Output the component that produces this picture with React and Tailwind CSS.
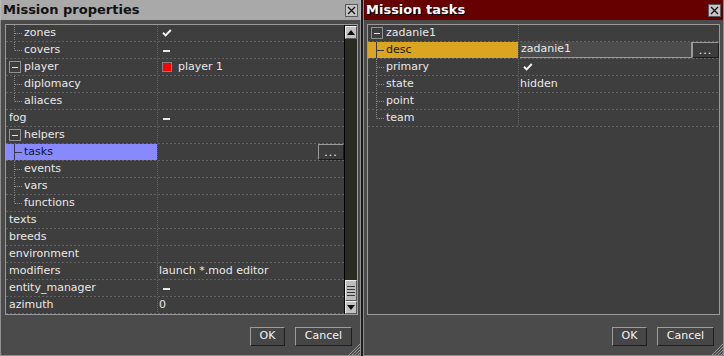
import React from "react";

const dashH =
  "h-px shrink-0 bg-[repeating-linear-gradient(90deg,#626262_0_2px,transparent_2px_4px)]";
const dashV =
  "w-px shrink-0 self-stretch bg-[repeating-linear-gradient(180deg,#626262_0_1px,transparent_1px_2px)]";

function Check() {
  return (
    <svg width="10" height="8" viewBox="0 0 10 8" className="ml-[3px] shrink-0">
      <path d="M1 3.8 L3.6 6.4 L8.8 1" stroke="#f2f2f2" strokeWidth="2" fill="none" />
    </svg>
  );
}

function Dash() {
  return <span className="ml-[4px] mt-[1px] w-[7px] h-[2px] bg-[#e8e8e8] shrink-0" />;
}

function Tree({ last, sel }) {
  const c = sel ? "#3a3a44" : "#8a8a8a";
  const d = sel ? undefined : "1 1";
  return (
    <svg width="18" height="16" className="shrink-0">
      <line x1="8.5" y1="0" x2="8.5" y2={last ? 8.5 : 16} stroke={c} strokeDasharray={d} />
      <line x1="9" y1="8.5" x2="16" y2="8.5" stroke={c} strokeDasharray={d} />
    </svg>
  );
}

function Box() {
  return (
    <svg width="12" height="12" className="ml-[3px] mr-[3px] shrink-0">
      <rect x="0.5" y="0.5" width="11" height="11" fill="none" stroke="#e4e4e4" strokeDasharray="1 1" />
      <line x1="3" y1="6.5" x2="9" y2="6.5" stroke="#e4e4e4" />
    </svg>
  );
}

function Row({ nameW, kind, name, sel, value }) {
  return (
    <>
      <div className="flex h-[16px] shrink-0">
        <div className={`flex items-center shrink-0 ${nameW} ${sel ? sel : ""}`}>
          {kind === "top" && <span className="pl-[3px]">{name}</span>}
          {kind === "box" && (
            <>
              <Box />
              <span>{name}</span>
            </>
          )}
          {(kind === "mid" || kind === "last") && (
            <>
              <Tree last={kind === "last"} sel={!!sel} />
              <span>{name}</span>
            </>
          )}
        </div>
        <div className={dashV} />
        <div className="flex flex-1 items-center min-w-0 pl-[1px]">{value}</div>
      </div>
      <div className={dashH} />
    </>
  );
}

function DotsBtn({ w }) {
  return (
    <div
      className={`ml-auto flex items-end justify-center ${w} h-[16px] pb-[1px] bg-[#3c3c3c] border border-t-[#9a9a9a] border-l-[#9a9a9a] border-b-[#1c1c1c] border-r-[#1c1c1c] text-[#f0f0f0] leading-none tracking-[1px]`}
    >
      ...
    </div>
  );
}

function Btn({ children, w }) {
  return (
    <div
      className={`flex items-center justify-center h-[19px] ${w} bg-[#464646] border border-t-[#9c9c9c] border-l-[#9c9c9c] border-b-[#1e1e1e] border-r-[#1e1e1e] text-[#f2f2f2]`}
    >
      {children}
    </div>
  );
}

function CloseBtn() {
  return (
    <div className="flex items-center justify-center w-[13px] h-[13px] bg-[#c6c6c6] border border-[#5a5a5a]">
      <svg width="9" height="9" viewBox="0 0 9 9">
        <path d="M1 1 L8 8 M8 1 L1 8" stroke="#101010" strokeWidth="1.3" />
      </svg>
    </div>
  );
}

function Grip() {
  return (
    <svg width="13" height="13" className="absolute bottom-0 right-0">
      <path d="M12 1 L1 12 M12 4 L4 12 M12 7 L7 12 M12 10 L10 12" stroke="#9a9a9a" strokeWidth="1" />
    </svg>
  );
}

function ScrollArrow({ down }) {
  return (
    <div className="flex items-center justify-center h-[13px] shrink-0 bg-[#c2c2c2] border border-t-[#f0f0f0] border-l-[#f0f0f0] border-b-[#5a5a5a] border-r-[#5a5a5a]">
      <svg width="8" height="5" viewBox="0 0 8 5">
        {down ? <path d="M0 0 H8 L4 5 Z" fill="#101010" /> : <path d="M0 5 H8 L4 0 Z" fill="#101010" />}
      </svg>
    </div>
  );
}

function Scrollbar() {
  return (
    <div className="flex flex-col w-[13px] shrink-0 bg-[#2a2b23] border-l border-black pt-px">
      <ScrollArrow />
      <div className="flex-1" />
      <div className="flex flex-col justify-center gap-[2px] h-[21px] shrink-0 bg-[#bcbcbc] border border-t-[#eeeeee] border-l-[#eeeeee] border-b-[#5a5a5a] border-r-[#5a5a5a] px-[1px]">
        <div className="h-px bg-[#3a3a3a]" />
        <div className="h-px bg-[#3a3a3a]" />
        <div className="h-px bg-[#3a3a3a]" />
        <div className="h-px bg-[#3a3a3a]" />
      </div>
      <ScrollArrow down />
    </div>
  );
}

const leftRows = [
  { kind: "mid", name: "zones", value: <Check /> },
  { kind: "last", name: "covers", value: <Dash /> },
  {
    kind: "box",
    name: "player",
    value: (
      <>
        <span className="ml-[3px] w-[10px] h-[10px] bg-[#ff0000] border border-[#808080] shrink-0" />
        <span className="ml-[6px]">player 1</span>
      </>
    ),
  },
  { kind: "mid", name: "diplomacy" },
  { kind: "last", name: "aliaces" },
  { kind: "top", name: "fog", value: <Dash /> },
  { kind: "box", name: "helpers" },
  { kind: "mid", name: "tasks", sel: "bg-[#8888ff] text-[#141414]", value: <DotsBtn w="w-[26px]" /> },
  { kind: "mid", name: "events" },
  { kind: "mid", name: "vars" },
  { kind: "last", name: "functions" },
  { kind: "top", name: "texts" },
  { kind: "top", name: "breeds" },
  { kind: "top", name: "environment" },
  { kind: "top", name: "modifiers", value: <span>launch *.mod editor</span> },
  { kind: "top", name: "entity_manager", value: <Dash /> },
  { kind: "top", name: "azimuth", value: <span>0</span> },
];

const rightRows = [
  { kind: "box", name: "zadanie1" },
  {
    kind: "mid",
    name: "desc",
    sel: "bg-[#daa520] text-[#141414]",
    value: (
      <>
        <div className="flex items-center h-[16px] flex-1 bg-[#4c4c4c] border-b border-r border-[#9a9a9a] pl-[1px]">
          zadanie1
        </div>
        <DotsBtn w="w-[27px]" />
      </>
    ),
  },
  { kind: "mid", name: "primary", value: <Check /> },
  { kind: "mid", name: "state", value: <span>hidden</span> },
  { kind: "mid", name: "point" },
  { kind: "last", name: "team" },
];

export default function App() {
  return (
    <div className="flex w-[724px] h-[356px] bg-[#1c1c1c] font-['DejaVu_Sans',sans-serif] text-[11px] text-[#e8e8e8] overflow-hidden">
      {/* Left window */}
      <div className="relative flex flex-col w-[361px] h-full shrink-0">
        <div className="flex items-center justify-between h-[20px] shrink-0 bg-[#a9a9a9] border-l border-r border-[#b8b8b8] pl-[2px] pr-[2px]">
          <span className="text-[13px] font-bold text-[#121212]">Mission properties</span>
          <CloseBtn />
        </div>
        <div className="flex flex-col flex-1 bg-[#4b4b4b] border-l border-r border-b border-[#909090] pl-[4px] pr-[2px] pt-[4px]">
          <div className="flex h-[291px] shrink-0 bg-[#3e3e3e] border border-[#9a9a9a]">
            <div className="flex flex-col flex-1 min-w-0">
              {leftRows.map((r) => (
                <Row key={r.name} nameW="w-[151px]" {...r} />
              ))}
            </div>
            <Scrollbar />
          </div>
          <div className="flex justify-end gap-[10px] pt-[12px] pr-[6px]">
            <Btn w="w-[35px]">OK</Btn>
            <Btn w="w-[57px]">Cancel</Btn>
          </div>
        </div>
        <Grip />
      </div>

      {/* Right window */}
      <div className="relative flex flex-col w-[361px] h-full shrink-0 ml-[2px]">
        <div className="flex items-center justify-between h-[20px] shrink-0 bg-[#660000] border-l border-r border-[#8a8a8a] pl-[2px] pr-[2px]">
          <span className="text-[13px] font-bold text-white [text-shadow:1px_1px_0_#000]">Mission tasks</span>
          <CloseBtn />
        </div>
        <div className="flex flex-col flex-1 bg-[#4b4b4b] border-l border-r border-b border-[#909090] pl-[3px] pr-[3px] pt-[4px]">
          <div className="flex flex-col h-[291px] shrink-0 bg-[#3e3e3e] border border-[#9a9a9a]">
            {rightRows.map((r) => (
              <Row key={r.name} nameW="w-[150px]" {...r} />
            ))}
          </div>
          <div className="flex justify-end gap-[10px] pt-[12px] pr-[6px]">
            <Btn w="w-[35px]">OK</Btn>
            <Btn w="w-[57px]">Cancel</Btn>
          </div>
        </div>
        <Grip />
      </div>
    </div>
  );
}
